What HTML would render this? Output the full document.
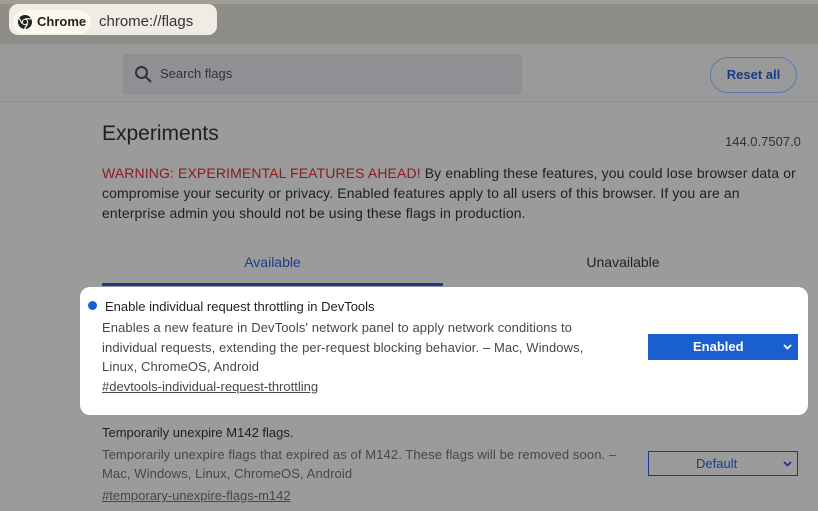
<!DOCTYPE html>
<html><head><meta charset="utf-8"><style>
*{margin:0;padding:0;box-sizing:border-box}
body{width:818px;height:511px;overflow:hidden;background:#9b9b9b;font-family:"Liberation Sans",Arial,sans-serif;position:relative;color:#1f1f1f}
.abs{position:absolute}
.top{left:0;top:0;width:818px;height:44px;background:#8e8c86;border-top:4px solid #a09e92}
.hdr{left:0;top:44px;width:818px;height:58px;background:#9a9a9a;border-bottom:1px solid #8e8e8e}
.pill{left:9px;top:4px;width:208px;height:31px;background:#efece5;border-radius:9px}
.chip{left:13px;top:10px;width:78px;height:24px;background:#fbf8ee;border-radius:12px}
.t{white-space:nowrap}
</style></head><body>
<div class="abs top"></div>
<div class="abs hdr"></div>
<div class="abs pill"></div>
<div class="abs chip"></div>
<svg class="abs" style="left:17px;top:14px" width="16" height="16" viewBox="0 0 16 16"><circle cx="8" cy="8" r="7" fill="#222"/><circle cx="8" cy="8" r="3.2" fill="#fbf8ee"/><circle cx="8" cy="8" r="2.2" fill="#222"/><path d="M8 4.8 L14.5 4.8 M5.2 9.6 L2 4 M10.8 9.6 L7.5 15" stroke="#fbf8ee" stroke-width="1.2"/></svg>
<div class="abs t" style="left:37px;top:14px;font-size:13px;font-weight:bold;color:#222">Chrome</div>
<div class="abs t" style="left:99px;top:13px;font-size:15px;color:#333">chrome://flags</div>
<div class="abs" style="left:123px;top:54px;width:399px;height:41px;background:#8f9094;border-radius:3px"></div>
<svg class="abs" style="left:134px;top:65px" width="19" height="19" viewBox="0 0 19 19"><circle cx="7.5" cy="7.5" r="5.5" fill="none" stroke="#333" stroke-width="2"/><path d="M11.5 11.5 L17 17" stroke="#333" stroke-width="2"/></svg>
<div class="abs t" style="left:160px;top:66px;font-size:13px;color:#333">Search flags</div>
<div class="abs t" style="left:710px;top:57px;width:87px;height:36px;border:1px solid #5779b8;border-radius:18px;color:#1a3b8c;font-size:13px;font-weight:bold;line-height:34px;text-align:center">Reset all</div>
<div class="abs t" style="left:102px;top:122px;font-size:21px;color:#1f1f1f">Experiments</div>
<div class="abs t" style="left:725px;top:134px;font-size:13px;color:#333">144.0.7507.0</div>
<div class="abs" style="left:102px;top:163px;width:702px;font-size:14px;line-height:20px;color:#1f1f1f;letter-spacing:0.12px"><span style="color:#8b1a1a">WARNING: EXPERIMENTAL FEATURES AHEAD!</span> By enabling these features, you could lose browser data or compromise your security or privacy. Enabled features apply to all users of this browser. If you are an enterprise admin you should not be using these flags in production.</div>
<div class="abs t" style="left:102px;top:254px;width:341px;text-align:center;font-size:14px;color:#1a3b8c">Available</div>
<div class="abs t" style="left:443px;top:254px;width:360px;text-align:center;font-size:14px;color:#222">Unavailable</div>
<div class="abs" style="left:102px;top:283px;width:341px;height:3px;background:#1a3b8c"></div>
<div class="abs" style="left:80px;top:287px;width:728px;height:128px;background:#fff;border-radius:10px"></div>
<div class="abs" style="left:88px;top:301px;width:9px;height:9px;border-radius:50%;background:#1a5fd6"></div>
<div class="abs t" style="left:105px;top:299px;font-size:13px;color:#1f1f1f">Enable individual request throttling in DevTools</div>
<div class="abs" style="left:102px;top:318px;width:500px;font-size:13px;line-height:19.5px;color:#474747;letter-spacing:0.1px">Enables a new feature in DevTools' network panel to apply network conditions to individual requests, extending the per-request blocking behavior. – Mac, Windows, Linux, ChromeOS, Android</div>
<div class="abs t" style="left:102px;top:379px;font-size:13px;color:#474747;text-decoration:underline">#devtools-individual-request-throttling</div>
<div class="abs t" style="left:648px;top:334px;width:150px;height:26px;background:#1a5fd0;color:#fff;font-size:13px;font-weight:bold;line-height:26px;padding-left:45px">Enabled<svg style="position:absolute;right:6px;top:10px" width="9" height="6" viewBox="0 0 9 6"><path d="M1 1 L4.5 4.5 L8 1" fill="none" stroke="#fff" stroke-width="1.8"/></svg></div>
<div class="abs t" style="left:102px;top:425px;font-size:13px;color:#1f1f1f">Temporarily unexpire M142 flags.</div>
<div class="abs" style="left:102px;top:445px;width:535px;font-size:13px;line-height:19px;color:#474747;letter-spacing:0.1px">Temporarily unexpire flags that expired as of M142. These flags will be removed soon. – Mac, Windows, Linux, ChromeOS, Android</div>
<div class="abs t" style="left:102px;top:488px;font-size:13px;color:#474747;text-decoration:underline">#temporary-unexpire-flags-m142</div>
<div class="abs t" style="left:648px;top:451px;width:150px;height:25px;border:1px solid #1a3b8c;color:#1a3b8c;font-size:13px;line-height:23px;padding-left:47px">Default<svg style="position:absolute;right:5px;top:9px" width="9" height="6" viewBox="0 0 9 6"><path d="M1 1 L4.5 4.5 L8 1" fill="none" stroke="#1a3b8c" stroke-width="1.8"/></svg></div>
</body></html>
